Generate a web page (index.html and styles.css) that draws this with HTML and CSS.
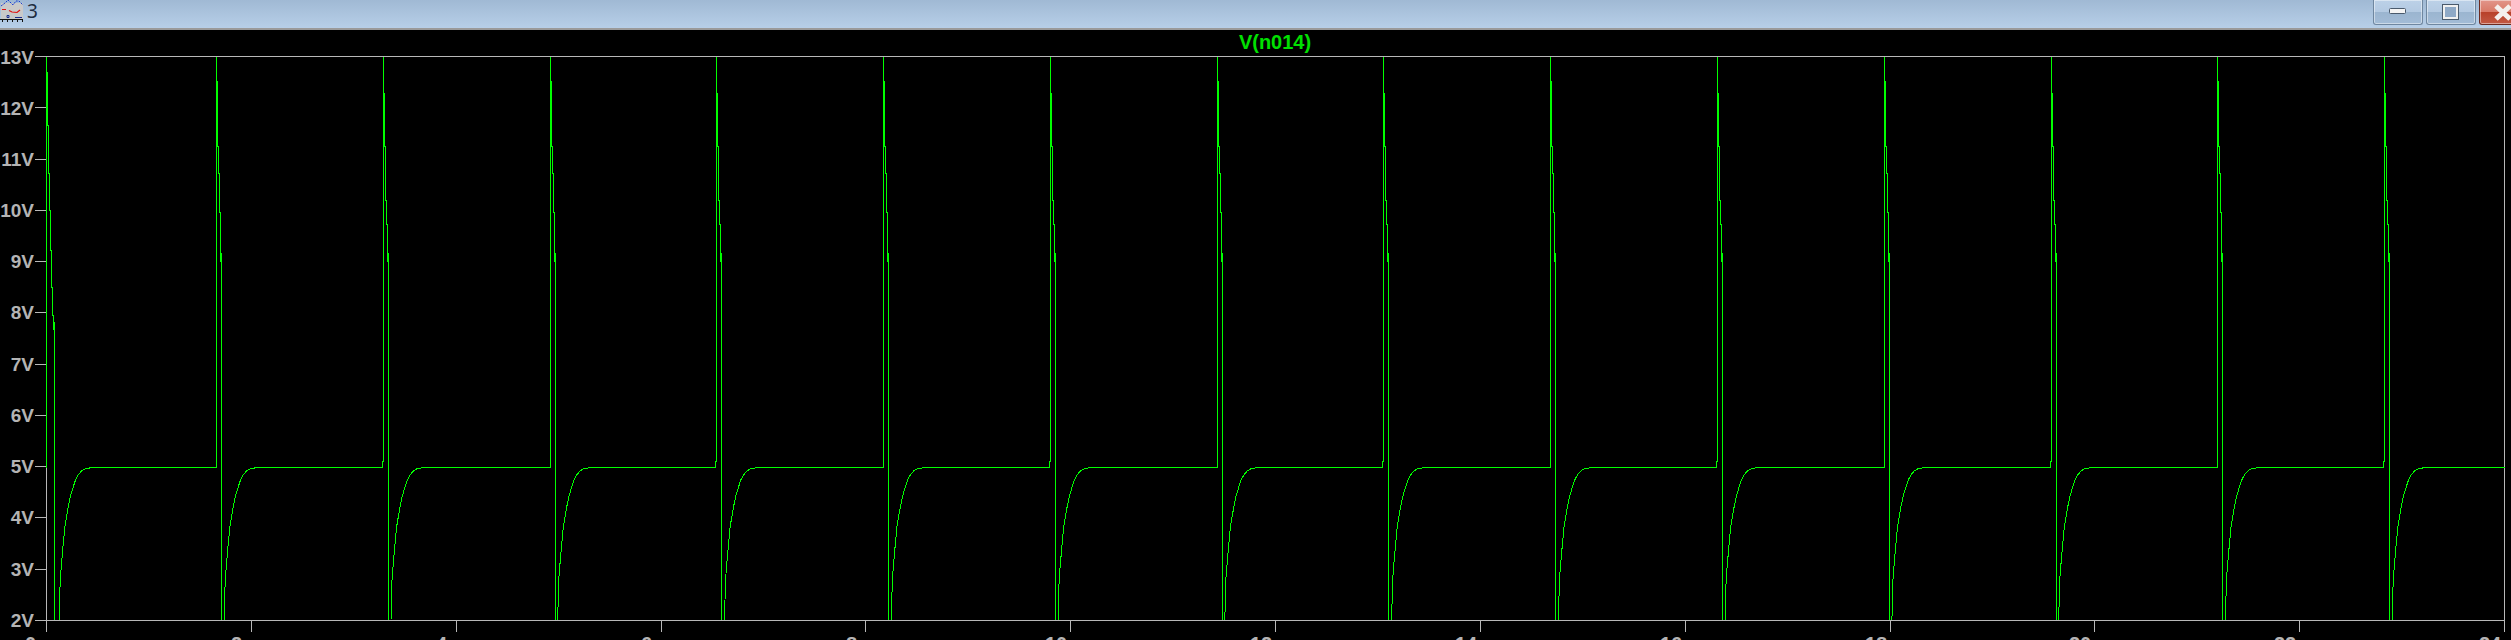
FILE: index.html

```html
<!DOCTYPE html>
<html>
<head>
<meta charset="utf-8">
<title>3</title>
<link rel="stylesheet" href="styles.css">
</head>
<body>

<div class="titlebar">
	<div class="title_left">
		<svg class="win_icon" width="24" height="22" viewBox="0 0 24 22">
			<rect x="1" y="3" width="22" height="16" fill="#c9c9c9"/>
			<polyline points="1,6 5,3 8,0 11,3 13,5 16,1 19,1 23,5" fill="none" stroke="#1c3fd0" stroke-dasharray="2 1"/>
			<polyline points="2,9.5 6,9.5" fill="none" stroke="#e01010"/>
			<polyline points="9,10.5 12,12 17,12.5 20,10" fill="none" stroke="#e01010" stroke-width="1.2"/>
			<path d="M7 15.5h2v2h-2zM15 17.5h7" fill="none" stroke="#1a2f90"/>
			<path d="M0 19.5h23M2.500 20v2M7.500 20v2M12.500 20v2M17.500 20v2M22.500 20v2" fill="none" stroke="#111"/>
		</svg>
		<span class="win_name">3</span>
	</div>
	<div class="win_btns">
		<div class="win_btn">
			<svg width="18" height="8" viewBox="0 0 18 8"><rect x="0.500" y="0.500" width="16" height="5" rx="1" fill="#f4f4f4" stroke="#4a5a6c"/></svg>
		</div>
		<div class="win_btn">
			<svg width="18" height="17" viewBox="0 0 18 17"><rect x="1.500" y="1.500" width="14" height="13" fill="#8fa9c6" stroke="#f0f0f0" stroke-width="3"/><rect x="0.500" y="0.500" width="16" height="15" fill="none" stroke="#4a5a6c"/></svg>
		</div>
		<div class="win_btn btn_close">
			<svg width="20" height="17" viewBox="0 0 20 17"><path d="M3 2L17 15M17 2L3 15" fill="none" stroke="#f4f0ee" stroke-width="5"/></svg>
		</div>
	</div>
</div>

<svg class="plot" width="2511" height="610" viewBox="0 30 2511 610">
	<defs>
		<clipPath id="plot_area"><rect x="46" y="56" width="2459" height="565"/></clipPath>
		<path id="rise" d="M7.700 620L8.700 580 9.800 566 11 552 13.300 527 14.800 518 16.700 507 19 496 21.700 487 24 480 26.700 475 30 471 33.300 469 38 468 43.300 467.500H165"/>
		<path id="spike_a" d="M-2 467.500H0V56.500 81H1V146H2V173H3V212H4V262M5 253V620M1 81V146"/>
		<path id="spike_b" d="M-2 467.500H-1V461H0V56.500 93H1V146H2V200H3V224H4V262M5 253V620M1 93V146"/>
	</defs>

	<text class="plot_title" x="1275" y="49">V(n014)</text>

	<path class="axis" d="M46.500 56.500H2504.500V632M46.500 56V632M35 620.500H2504.500"/>
	<path class="axis" d="M35 56.500H46M35 107.500H46M35 159.500H46M35 210.500H46M35 261.500H46M35 312.500H46M35 364.500H46M35 415.500H46M35 466.500H46M35 517.500H46M35 569.500H46"/>
	<path class="axis" d="M251.500 620V632M456.500 620V632M661.500 620V632M865.500 620V632M1070.500 620V632M1275.500 620V632M1480.500 620V632M1685.500 620V632M1890.500 620V632M2094.500 620V632M2299.500 620V632"/>

	<text class="lbl_y" x="34" y="64">13V</text>
	<text class="lbl_y" x="34" y="115">12V</text>
	<text class="lbl_y" x="34" y="166">11V</text>
	<text class="lbl_y" x="34" y="217">10V</text>
	<text class="lbl_y" x="34" y="268">9V</text>
	<text class="lbl_y" x="34" y="319">8V</text>
	<text class="lbl_y" x="34" y="371">7V</text>
	<text class="lbl_y" x="34" y="422">6V</text>
	<text class="lbl_y" x="34" y="473">5V</text>
	<text class="lbl_y" x="34" y="524">4V</text>
	<text class="lbl_y" x="34" y="576">3V</text>
	<text class="lbl_y" x="34" y="627">2V</text>

	<text class="lbl_x" x="25" y="651">0</text>
	<text class="lbl_x" x="231" y="651">2</text>
	<text class="lbl_x" x="436" y="651">4</text>
	<text class="lbl_x" x="641" y="651">6</text>
	<text class="lbl_x" x="846" y="651">8</text>
	<text class="lbl_x" x="1045" y="651">10</text>
	<text class="lbl_x" x="1250" y="651">12</text>
	<text class="lbl_x" x="1455" y="651">14</text>
	<text class="lbl_x" x="1660" y="651">16</text>
	<text class="lbl_x" x="1865" y="651">18</text>
	<text class="lbl_x" x="2069" y="651">20</text>
	<text class="lbl_x" x="2274" y="651">22</text>
	<text class="lbl_x" x="2479" y="651">24</text>

	<g class="trace" clip-path="url(#plot_area)">
		<!-- first pulse starts on the axis and decays slower -->
		<path d="M46.500 467.500V56.500 72H47.500V125H48.500V173H49.500V210H50.500V250H51.500V287H52.500V315H53.500V330M54.500 322V620M47.500 72V125"/>
		<use href="#rise" x="51.500"/>

		<use href="#spike_a" x="216.500"/><use href="#rise" x="216.500"/>
		<use href="#spike_b" x="383.300"/><use href="#rise" x="383.300"/>
		<use href="#spike_a" x="550"/><use href="#rise" x="550"/>
		<use href="#spike_b" x="716.800"/><use href="#rise" x="716.800"/>
		<use href="#spike_a" x="883.600"/><use href="#rise" x="883.600"/>
		<use href="#spike_b" x="1050.400"/><use href="#rise" x="1050.400"/>
		<use href="#spike_a" x="1217.100"/><use href="#rise" x="1217.100"/>
		<use href="#spike_b" x="1383.900"/><use href="#rise" x="1383.900"/>
		<use href="#spike_a" x="1550.700"/><use href="#rise" x="1550.700"/>
		<use href="#spike_b" x="1717.400"/><use href="#rise" x="1717.400"/>
		<use href="#spike_a" x="1884.200"/><use href="#rise" x="1884.200"/>
		<use href="#spike_b" x="2051"/><use href="#rise" x="2051"/>
		<use href="#spike_a" x="2217.700"/><use href="#rise" x="2217.700"/>
		<use href="#spike_b" x="2384.500"/><use href="#rise" x="2384.500"/>
	</g>
</svg>

</body>
</html>
```

FILE: styles.css

```css
html, body {
	margin: 0;
	padding: 0;
	height: 640px;
	overflow: hidden;
	background: #000;
}

.titlebar {
	display: flex;
	justify-content: space-between;
	height: 28px;
	border-bottom: 2px solid #9a9a9a;
	background: linear-gradient(#a0b9d4, #b7cfe8);
	overflow: hidden;
}
.title_left {
	display: flex;
	align-items: flex-start;
}
.win_icon {
	display: block;
}
.win_name {
	margin-left: 3px;
	font-family: "Noto Sans", sans-serif;
	font-size: 19px;
	line-height: 22px;
	color: #1d2c40;
}

.win_btns {
	display: flex;
	gap: 3px;
	margin-right: -16px;
}
.win_btn {
	display: flex;
	align-items: center;
	justify-content: center;
	box-sizing: border-box;
	width: 50px;
	height: 25px;
	border: 1px solid #6f87a0;
	border-top: 0;
	border-radius: 0 0 3px 3px;
	box-shadow: inset 0 0 0 1px rgba(255,255,255,0.45);
	background: linear-gradient(#bcd1e8 0, #b4cae2 48%, #9bb5d0 52%, #a3bcd6 100%);
}
.btn_close {
	width: 48px;
	border-color: #6d2a20;
	background: linear-gradient(#e2958a 0, #d97a68 48%, #b8412a 52%, #c25a45 100%);
}

.plot {
	display: block;
	overflow: hidden;
}
.axis {
	fill: none;
	stroke: #b8b8b8;
	stroke-width: 1;
	shape-rendering: crispEdges;
}
.trace path, .trace use {
	fill: none;
	stroke: #00ff00;
	stroke-width: 1;
	shape-rendering: crispEdges;
}
.plot_title {
	font-family: "Liberation Sans", Arial, sans-serif;
	font-size: 20px;
	font-weight: bold;
	fill: #00e000;
	text-anchor: middle;
}
.lbl_y, .lbl_x {
	font-family: "Liberation Sans", Arial, sans-serif;
	font-size: 19px;
	font-weight: bold;
	fill: #b4b4b4;
}
.lbl_x {
	font-size: 20px;
}
.lbl_y {
	text-anchor: end;
}
```
